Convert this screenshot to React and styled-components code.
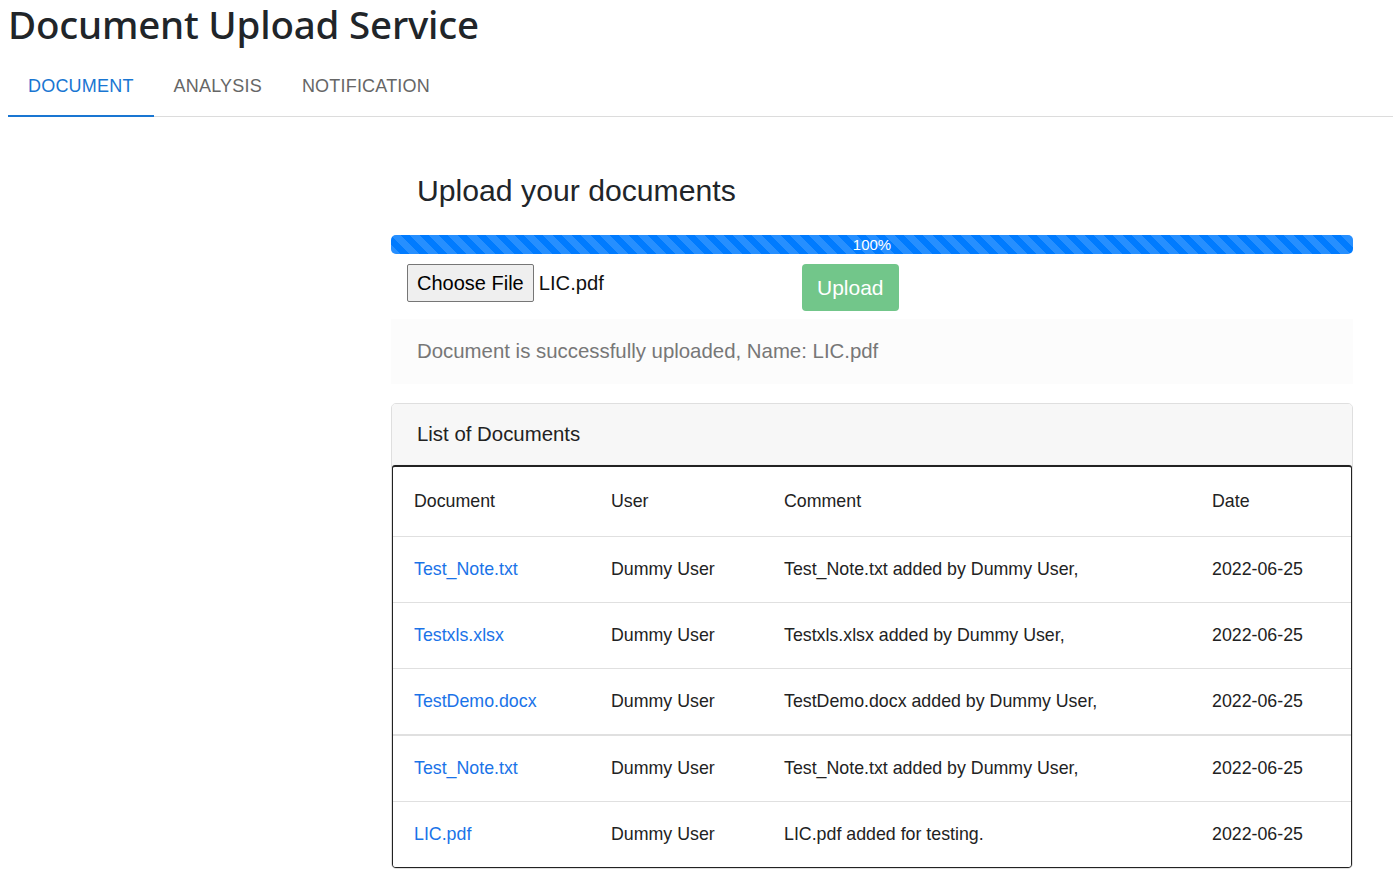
import React from 'react'
import styled, { createGlobalStyle } from 'styled-components'

const GlobalStyle = createGlobalStyle`
  body {
    margin: 0;
    background: #fff;
    font-family: "Liberation Sans", Arial, sans-serif;
    color: #212529;
  }
`

const documents = [
  { name: 'Test_Note.txt', user: 'Dummy User', comment: 'Test_Note.txt added by Dummy User,', date: '2022-06-25' },
  { name: 'Testxls.xlsx', user: 'Dummy User', comment: 'Testxls.xlsx added by Dummy User,', date: '2022-06-25' },
  { name: 'TestDemo.docx', user: 'Dummy User', comment: 'TestDemo.docx added by Dummy User,', date: '2022-06-25' },
  { name: 'Test_Note.txt', user: 'Dummy User', comment: 'Test_Note.txt added by Dummy User,', date: '2022-06-25', split: true },
  { name: 'LIC.pdf', user: 'Dummy User', comment: 'LIC.pdf added for testing.', date: '2022-06-25' },
]

const tabs = ['DOCUMENT', 'ANALYSIS', 'NOTIFICATION']

const App = () => {
  return (
    <Page>
      <GlobalStyle />
      <Title>Document Upload Service</Title>
      <TabBar>
        {tabs.map((t, i) => (
          <Tab key={t} active={i === 0}>{t}</Tab>
        ))}
      </TabBar>

      <Main>
        <Heading>Upload your documents</Heading>
        <Progress>
          <ProgressBar>100%</ProgressBar>
        </Progress>

        <UploadRow>
          <FilePicker>
            <ChooseButton>Choose File</ChooseButton>
            <FileName>LIC.pdf</FileName>
          </FilePicker>
          <UploadButton disabled>Upload</UploadButton>
        </UploadRow>

        <Alert>Document is successfully uploaded, Name: LIC.pdf</Alert>

        <Card>
          <CardHeader>List of Documents</CardHeader>
          <TableBox>
            <Table>
              <colgroup>
                <col style={{ width: 197 }} />
                <col style={{ width: 173 }} />
                <col style={{ width: 428 }} />
                <col />
              </colgroup>
              <thead>
                <tr>
                  <HeadCell>Document</HeadCell>
                  <HeadCell>User</HeadCell>
                  <HeadCell>Comment</HeadCell>
                  <HeadCell>Date</HeadCell>
                </tr>
              </thead>
              <tbody>
                {documents.map((d, i) => (
                  <Row key={i} split={d.split}>
                    <Cell><DocLink href="#">{d.name}</DocLink></Cell>
                    <Cell>{d.user}</Cell>
                    <Cell>{d.comment}</Cell>
                    <Cell>{d.date}</Cell>
                  </Row>
                ))}
              </tbody>
            </Table>
          </TableBox>
        </Card>
      </Main>
    </Page>
  )
}

const Page = styled.div`
padding: 0 0 0 8px;
`

const Title = styled.h1`
margin: 0;
padding-top: 1px;
font-family: "Noto Sans", "Open Sans", sans-serif;
font-weight: 500;
font-size: 38.5px;
line-height: 47px;
color: #212529;
letter-spacing: -0.2px;
`

const TabBar = styled.div`
display: flex;
margin-top: 8px;
border-bottom: 1px solid #dcdcdc;
`

const Tab = styled.div`
display: flex;
align-items: center;
justify-content: center;
height: 61px;
padding: 2px 20px 0;
min-width: 145px;
box-sizing: border-box;
font-size: 18px;
letter-spacing: 0.2px;
color: ${({ active }) => (active ? '#1976d2' : '#666')};
border-bottom: 2px solid ${({ active }) => (active ? '#1976d2' : 'transparent')};
margin-bottom: -1px;
&:not(:first-child) {
  min-width: 0;
}
`

const Main = styled.div`
width: 962px;
margin-left: 383px;
padding-top: 56px;
`

const Heading = styled.h4`
margin: 0 0 27px 26px;
font-weight: 400;
font-size: 30.2px;
line-height: 35px;
color: #212529;
`

const Progress = styled.div`
height: 19px;
border-radius: 5px;
background: #e9ecef;
overflow: hidden;
`

const ProgressBar = styled.div`
height: 100%;
width: 100%;
background-color: #007bff;
background-image: linear-gradient(45deg, rgba(255,255,255,.15) 25%, transparent 25%, transparent 50%, rgba(255,255,255,.15) 50%, rgba(255,255,255,.15) 75%, transparent 75%, transparent);
background-size: 19px 19px;
color: #fff;
font-size: 15px;
line-height: 19px;
text-align: center;
`

const UploadRow = styled.div`
display: flex;
align-items: flex-start;
padding: 10px 0 0 16px;
`

const FilePicker = styled.div`
display: flex;
align-items: center;
width: 395px;
`

const ChooseButton = styled.button`
height: 38px;
padding: 0 9px;
font-family: "Liberation Sans", Arial, sans-serif;
font-size: 20px;
color: #000;
background: #efefef;
border: 1px solid #767676;
border-radius: 2px;
`

const FileName = styled.span`
margin-left: 5px;
font-size: 20.2px;
color: #111;
`

const UploadButton = styled.button`
height: 47px;
padding: 0 15px;
font-family: "Liberation Sans", Arial, sans-serif;
font-size: 21px;
color: #fff;
background: #72c68a;
border: none;
border-radius: 4px;
`

const Alert = styled.div`
margin-top: 8px;
height: 65px;
padding: 0 26px;
display: flex;
align-items: center;
background: #fcfcfc;
color: #777;
font-size: 20.4px;
`

const Card = styled.div`
margin-top: 19px;
border: 1px solid #dfdfdf;
border-radius: 5px;
overflow: hidden;
`

const CardHeader = styled.div`
height: 61px;
padding: 0 25px;
display: flex;
align-items: center;
background: #f7f7f7;
font-size: 20.4px;
color: #222;
`

const TableBox = styled.div`
border: 1px solid #222;
border-top-width: 2px;
border-radius: 3px;
box-shadow: 0 1px 2px rgba(0,0,0,.4);
`

const Table = styled.table`
width: 100%;
border-collapse: collapse;
table-layout: fixed;
`

const HeadCell = styled.th`
height: 69px;
padding: 0 0 0 21px;
text-align: left;
font-weight: 400;
font-size: 17.8px;
color: #222;
border-bottom: 1px solid #e0e0e0;
`

const Row = styled.tr`
border-top: ${({ split }) => (split ? '2px solid #e0e0e0' : 'none')};
&:not(:last-child) td {
  border-bottom: 1px solid #e0e0e0;
}
`

const Cell = styled.td`
height: 65px;
padding: 0 0 0 21px;
font-size: 17.8px;
color: #222;
`

const DocLink = styled.a`
color: #1a73e8;
text-decoration: none;
`

export default App
